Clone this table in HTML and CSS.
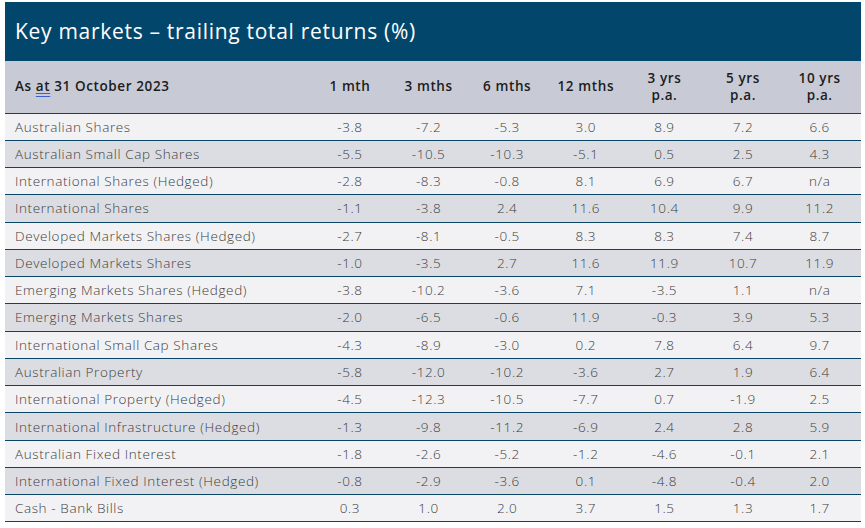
FILE: index.html
```html
<!DOCTYPE html>
<html lang="en">
<head>
<meta charset="utf-8">
<title>Key markets — trailing total returns</title>
<link rel="stylesheet" href="styles.css">
</head>
<body>
<div class="panel">
  <h1 class="title">Key markets – trailing total returns (%)</h1>
  <table class="returns">
    <colgroup>
      <col class="c-label"><col class="c-num"><col class="c-num"><col class="c-num"><col class="c-num"><col class="c-num"><col class="c-num"><col class="c-num">
    </colgroup>
    <thead>
      <tr>
        <th class="lbl">As <span class="mark">at</span> 31 October 2023</th>
        <th>1 mth</th>
        <th>3 mths</th>
        <th>6 mths</th>
        <th>12 mths</th>
        <th>3 yrs<br>p.a.</th>
        <th>5 yrs<br>p.a.</th>
        <th>10 yrs<br>p.a.</th>
      </tr>
    </thead>
    <tbody>
      <tr><td class="lbl">Australian Shares</td><td>-3.8</td><td>-7.2</td><td>-5.3</td><td>3.0</td><td>8.9</td><td>7.2</td><td>6.6</td></tr>
      <tr><td class="lbl">Australian Small Cap Shares</td><td>-5.5</td><td>-10.5</td><td>-10.3</td><td>-5.1</td><td>0.5</td><td>2.5</td><td>4.3</td></tr>
      <tr><td class="lbl">International Shares (Hedged)</td><td>-2.8</td><td>-8.3</td><td>-0.8</td><td>8.1</td><td>6.9</td><td>6.7</td><td>n/a</td></tr>
      <tr><td class="lbl">International Shares</td><td>-1.1</td><td>-3.8</td><td>2.4</td><td>11.6</td><td>10.4</td><td>9.9</td><td>11.2</td></tr>
      <tr><td class="lbl">Developed Markets Shares (Hedged)</td><td>-2.7</td><td>-8.1</td><td>-0.5</td><td>8.3</td><td>8.3</td><td>7.4</td><td>8.7</td></tr>
      <tr><td class="lbl">Developed Markets Shares</td><td>-1.0</td><td>-3.5</td><td>2.7</td><td>11.6</td><td>11.9</td><td>10.7</td><td>11.9</td></tr>
      <tr><td class="lbl">Emerging Markets Shares (Hedged)</td><td>-3.8</td><td>-10.2</td><td>-3.6</td><td>7.1</td><td>-3.5</td><td>1.1</td><td>n/a</td></tr>
      <tr><td class="lbl">Emerging Markets Shares</td><td>-2.0</td><td>-6.5</td><td>-0.6</td><td>11.9</td><td>-0.3</td><td>3.9</td><td>5.3</td></tr>
      <tr><td class="lbl">International Small Cap Shares</td><td>-4.3</td><td>-8.9</td><td>-3.0</td><td>0.2</td><td>7.8</td><td>6.4</td><td>9.7</td></tr>
      <tr><td class="lbl">Australian Property</td><td>-5.8</td><td>-12.0</td><td>-10.2</td><td>-3.6</td><td>2.7</td><td>1.9</td><td>6.4</td></tr>
      <tr><td class="lbl">International Property (Hedged)</td><td>-4.5</td><td>-12.3</td><td>-10.5</td><td>-7.7</td><td>0.7</td><td>-1.9</td><td>2.5</td></tr>
      <tr><td class="lbl">International Infrastructure (Hedged)</td><td>-1.3</td><td>-9.8</td><td>-11.2</td><td>-6.9</td><td>2.4</td><td>2.8</td><td>5.9</td></tr>
      <tr><td class="lbl">Australian Fixed Interest</td><td>-1.8</td><td>-2.6</td><td>-5.2</td><td>-1.2</td><td>-4.6</td><td>-0.1</td><td>2.1</td></tr>
      <tr><td class="lbl">International Fixed Interest (Hedged)</td><td>-0.8</td><td>-2.9</td><td>-3.6</td><td>0.1</td><td>-4.8</td><td>-0.4</td><td>2.0</td></tr>
      <tr><td class="lbl">Cash - Bank Bills</td><td>0.3</td><td>1.0</td><td>2.0</td><td>3.7</td><td>1.5</td><td>1.3</td><td>1.7</td></tr>
    </tbody>
  </table>
</div>
</body>
</html>
```

FILE: styles.css
```css
html, body {
  margin: 0;
  padding: 0;
  background: #ffffff;
}

body {
  padding: 2px 5px 0 5px;
  font-family: "Open Sans", "Noto Sans", "Liberation Sans", sans-serif;
}

.panel {
  width: 856px;
}

.title {
  margin: 0;
  height: 59px;
  box-sizing: border-box;
  padding: 0 0 2px 10px;
  display: flex;
  align-items: center;
  background: #02476b;
  color: #ffffff;
  font-size: 21px;
  font-weight: 400;
  letter-spacing: 0.7px;
}

.returns {
  width: 100%;
  border-collapse: collapse;
  table-layout: fixed;
}

.c-label { width: 304px; }
.c-num { width: 78.2px; }

.returns thead tr {
  background: #c8cbd6;
  height: 52px;
}

.returns th {
  font-size: 13.5px;
  font-weight: 600;
  color: #1c1c1c;
  text-align: center;
  line-height: 17px;
  padding: 0;
  border-bottom: 1px solid #0b4566;
  letter-spacing: 0.6px;
}

.returns th.lbl {
  text-align: left;
  padding-left: 10px;
}

.mark {
  text-decoration: underline double #3b5fd1;
  text-underline-offset: 2px;
}

.returns tbody tr {
  height: 27.27px;
  background: #f2f2f4;
}

.returns tbody tr:nth-child(even) {
  background: #dcdde2;
}

.returns td {
  font-size: 13.5px;
  font-weight: 300;
  color: #3d3d3d;
  text-align: center;
  padding: 0;
  border-bottom: 1px solid #0b4566;
  white-space: nowrap;
  letter-spacing: 0.6px;
}

.returns td.lbl {
  text-align: left;
  padding-left: 10px;
}

.returns td:last-child,
.returns th:last-child {
  padding-right: 4px;
}
```
